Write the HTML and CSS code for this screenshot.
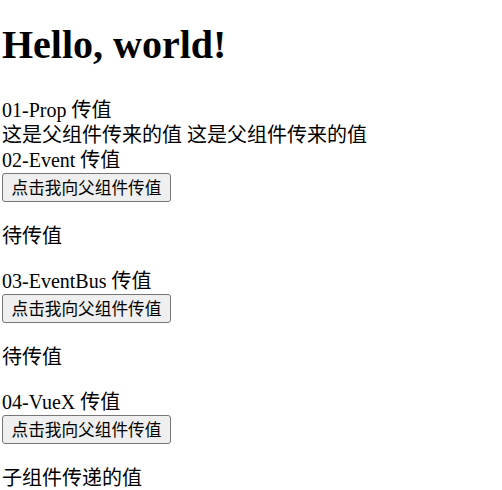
FILE: index.html
```html
<!DOCTYPE html>
<html>
<head>
<meta charset="utf-8">
<link rel="stylesheet" href="styles.css">
</head>
<body>
<div class="app">
  <h1 class="title">Hello, world!</h1>
  <div class="section">
    <div class="line">01-Prop 传值</div>
    <div class="line">这是父组件传来的值 这是父组件传来的值</div>
  </div>
  <div class="section">
    <div class="line">02-Event 传值</div>
    <div class="btn-row"><button class="btn">点击我向父组件传值</button></div>
    <p class="value">待传值</p>
  </div>
  <div class="section">
    <div class="line">03-EventBus 传值</div>
    <div class="btn-row"><button class="btn">点击我向父组件传值</button></div>
    <p class="value">待传值</p>
  </div>
  <div class="section">
    <div class="line">04-VueX 传值</div>
    <div class="btn-row"><button class="btn">点击我向父组件传值</button></div>
    <p class="value">子组件传递的值</p>
  </div>
</div>
</body>
</html>
```

FILE: styles.css
```css
html, body {
  margin: 0;
  padding: 0;
  background: #ffffff;
}
body {
  padding: 0 2px;
  color: #000000;
  font-family: "Liberation Serif", "Noto Sans CJK SC", serif;
  font-size: 20px;
  line-height: 25px;
}
.app {
  display: flow-root;
}
.title {
  font-size: 40px;
  line-height: 46px;
  font-weight: bold;
  margin: 22px 0 30px;
}
.line {
  height: 25px;
}
.btn-row {
  display: flex;
  align-items: flex-start;
  padding: 0 0 2px;
}
.value {
  margin: 20px 0;
  height: 25px;
}
.btn {
  font-family: "Noto Sans CJK SC", sans-serif;
  font-size: 16.67px;
  line-height: 21px;
  height: 29px;
  box-sizing: border-box;
  padding: 3px 8.5px;
  margin: 0;
  border: 1px solid #767676;
  border-radius: 3px;
  background: #efefef;
  color: #000000;
}
```
